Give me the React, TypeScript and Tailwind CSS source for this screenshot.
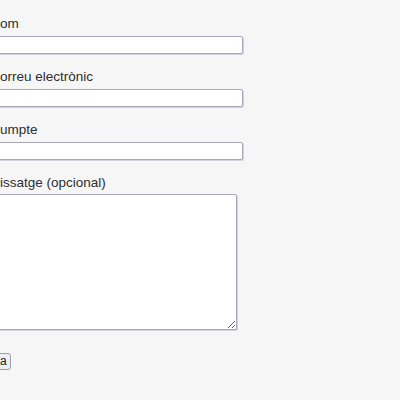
import React from 'react';

const fieldClass =
  'block h-[18px] w-[263px] rounded-[2px] border border-[#a9a7b8] bg-white shadow-[1px_1px_0_#d4d3dc] outline-none';

const labelClass = 'block pl-[20px] text-[13.5px] leading-[16px] text-[#2e2e2e]';

const App: React.FC = () => {
  return (
    <div className="min-h-screen w-full overflow-hidden bg-[#f6f6f6] font-['Liberation_Sans',Arial,sans-serif]">
      <form className="ml-[-20px] flex flex-col items-start pt-[16px]" onSubmit={(e) => e.preventDefault()}>
        {/* Nom */}
        <label className={labelClass} htmlFor="nom">om</label>
        <input id="nom" type="text" className={`${fieldClass} mt-[4px]`} />

        {/* Correu electrònic */}
        <label className={`${labelClass} mt-[15px]`} htmlFor="correu">orreu electrònic</label>
        <input id="correu" type="email" className={`${fieldClass} mt-[4px]`} />

        {/* Assumpte */}
        <label className={`${labelClass} mt-[15px]`} htmlFor="assumpte">umpte</label>
        <input id="assumpte" type="text" className={`${fieldClass} mt-[4px]`} />

        {/* Missatge */}
        <label className={`${labelClass} mt-[15px]`} htmlFor="missatge">issatge (opcional)</label>
        <textarea
          id="missatge"
          className="mt-[3px] block h-[136px] w-[257px] rounded-[2px] border border-[#a9a7b8] bg-white shadow-[1px_1px_0_#d4d3dc] outline-none"
        />

        <button
          type="submit"
          className="mt-[23px] ml-[-5px] block h-[17px] rounded-[3px] border border-[#9f9daf] bg-[#efefef] pl-[24px] pr-[3px] text-[12px] leading-[15px] text-[#222222]"
        >
          a
        </button>
      </form>
    </div>
  );
};

export default App;
